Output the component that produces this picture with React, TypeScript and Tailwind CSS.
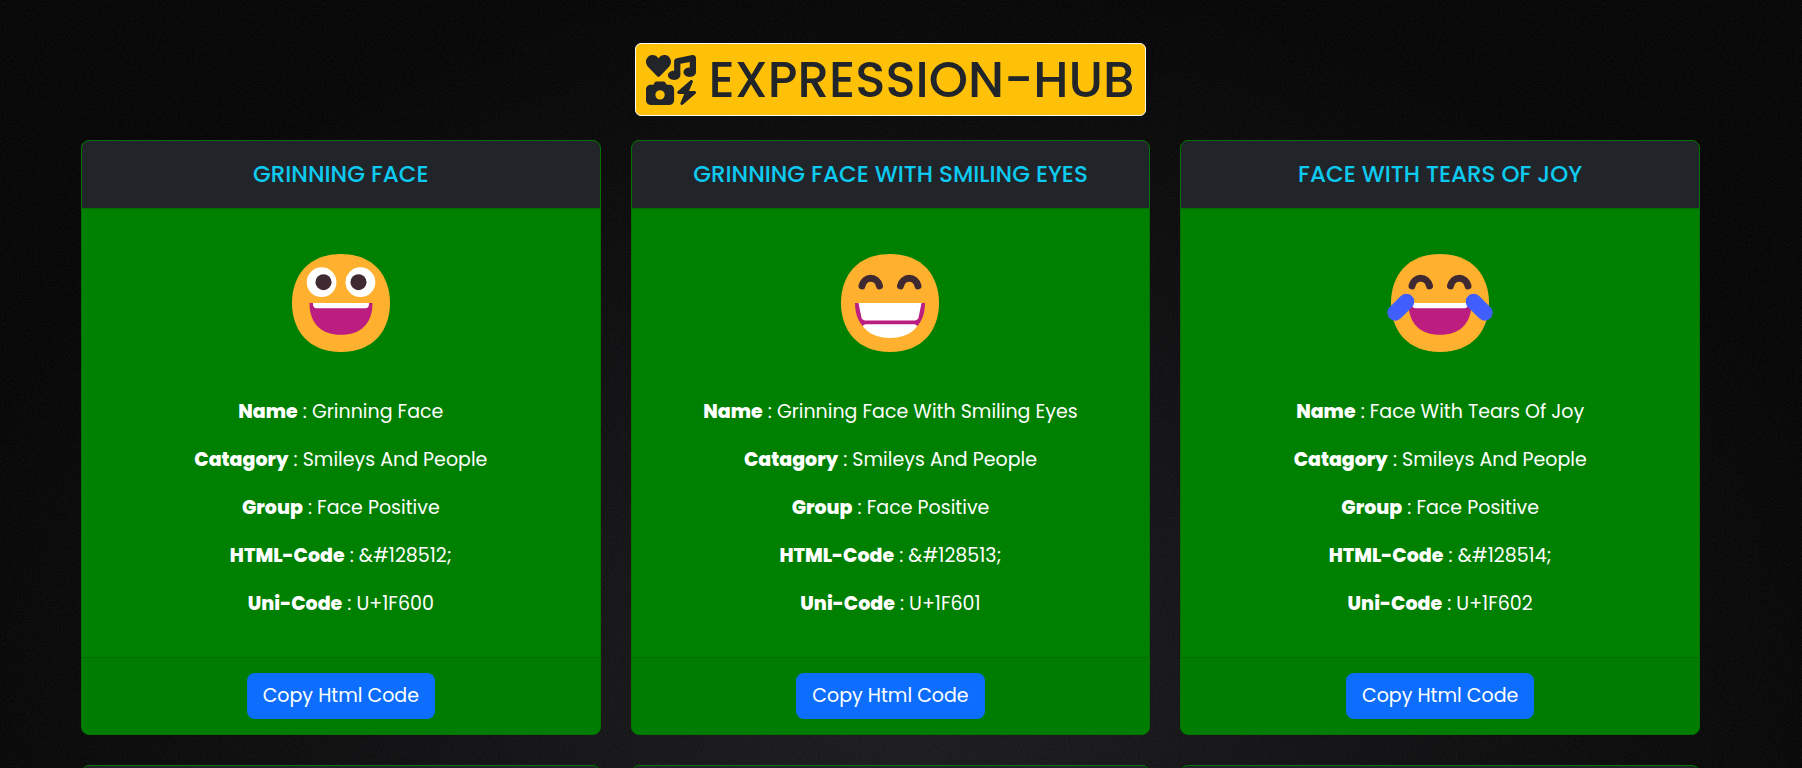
import { FaIcons } from "react-icons/fa6";
import type { ReactNode } from "react";

const EYES = (
  <g fill="none" stroke="#402A32" strokeWidth="2" strokeLinecap="round">
    <path d="M8 11.1C8.3 9.8 9.3 8.95 10.5 8.95S12.7 9.8 13 11.1" />
    <path d="M19 11.1C19.3 9.8 20.3 8.95 21.5 8.95S23.7 9.8 24 11.1" />
  </g>
);

const OPEN_MOUTH = (
  <>
    <path d="M7 16C7 22 10.5 25.1 16 25.1S25 22 25 16Z" fill="#BB1D80" />
    <path d="M8 16H24V16.5C24 17.05 23.55 17.5 23 17.5H9C8.45 17.5 8 17.05 8 16.5Z" fill="white" />
  </>
);

function Face({ label, children }: { label: string; children: ReactNode }) {
  return (
    <svg viewBox="0 0 32 32" className="size-28" role="img" aria-label={label}>
      <path
        d="M16 30C25.33 30 30 23.73 30 16S25.33 2 16 2 2 8.27 2 16 6.67 30 16 30Z"
        fill="#FFB02E"
      />
      {children}
    </svg>
  );
}

const EMOJIS = [
  {
    name: "Grinning Face",
    html: "&#128512;",
    uni: "U+1F600",
    art: (
      <>
        <circle cx="10.45" cy="10.05" r="4.25" fill="white" />
        <circle cx="21.55" cy="10.05" r="4.25" fill="white" />
        <circle cx="11" cy="10.05" r="2.3" fill="#402A32" />
        <circle cx="21" cy="10.05" r="2.3" fill="#402A32" />
        {OPEN_MOUTH}
      </>
    ),
  },
  {
    name: "Grinning Face With Smiling Eyes",
    html: "&#128513;",
    uni: "U+1F601",
    art: (
      <>
        {EYES}
        <path d="M6 16C6 18.6 6.7 20.9 8.2 22.6H23.8C25.3 20.9 26 18.6 26 16Z" fill="#BB1D80" />
        <path d="M7 16H25L24.2 20C24.1 20.6 23.6 21 23 21H9C8.4 21 7.9 20.6 7.8 20Z" fill="white" />
        <path d="M8.2 22.6C8.5 22.2 8.8 22.05 9.2 22.05H22.8C23.2 22.05 23.5 22.2 23.8 22.6C22 25 19.4 26 16 26S10 25 8.2 22.6Z" fill="white" />
      </>
    ),
  },
  {
    name: "Face With Tears Of Joy",
    html: "&#128514;",
    uni: "U+1F602",
    art: (
      <>
        {EYES}
        {OPEN_MOUTH}
        <path
          d="M6.4 15.6L3.2 18.8M25.6 15.6L28.8 18.8"
          stroke="#3F5FFF"
          strokeWidth="4.5"
          strokeLinecap="round"
        />
      </>
    ),
  },
];

const NEXT_ROW = ["U+1F603", "U+1F604", "U+1F605"];

function Field({ label, value }: { label: string; value: string }) {
  return (
    <p>
      <b className="font-extrabold">{label}</b> : {value}
    </p>
  );
}

export default function App() {
  return (
    <div className="relative h-screen overflow-hidden bg-black bg-[radial-gradient(ellipse_55%_95%_at_50%_90%,#18181b_0%,#0b0b0d_50%,#000000_100%)] font-['Poppins','Inter',sans-serif]">
      <svg className="absolute inset-0 size-full opacity-10" aria-hidden="true">
        <filter id="grain">
          <feTurbulence type="fractalNoise" baseFrequency="0.8" numOctaves="2" />
          <feColorMatrix type="saturate" values="0" />
        </filter>
        <rect width="100%" height="100%" filter="url(#grain)" />
      </svg>
      <main className="relative pt-[43px] pr-[102px] pl-[81px]">
        <header className="mb-6 flex justify-center">
          <h1 className="flex items-center gap-3 rounded-md border border-[#f8f9fa] bg-[#ffc107] px-[10px] text-[50px] leading-[71px] font-medium text-[#212529]">
            <FaIcons className="size-[50px]" />
            EXPRESSION-HUB
          </h1>
        </header>
        <div className="grid grid-cols-3 gap-[30px]">
          {EMOJIS.map((e) => (
            <article key={e.uni} className="rounded-lg border border-[#007000] bg-[#008000] text-white">
              <h2 className="rounded-t-[7px] border-b border-[#006f00] bg-[#212529] px-4 py-4 text-center text-[23px] leading-[35px] font-medium text-[#0dcaf0] uppercase">
                {e.name}
              </h2>
              <div className="flex flex-col items-center px-4 pt-[38px] pb-[38px]">
                <Face label={e.name}>{e.art}</Face>
                <div className="mt-[38px] flex flex-col gap-[18px] text-center text-[19px] leading-[30px]">
                  <Field label="Name" value={e.name} />
                  <Field label="Catagory" value="Smileys And People" />
                  <Field label="Group" value="Face Positive" />
                  <Field label="HTML-Code" value={e.html} />
                  <Field label="Uni-Code" value={e.uni} />
                </div>
              </div>
              <footer className="flex justify-center rounded-b-[7px] border-t border-[#006f00] bg-[#007c00] py-[15px]">
                <button
                  type="button"
                  className="rounded-lg bg-[#0d6efd] px-4 py-2 text-[19px] leading-[30px] text-white"
                >
                  Copy Html Code
                </button>
              </footer>
            </article>
          ))}
          {NEXT_ROW.map((id) => (
            <article key={id} className="h-[68px] rounded-lg border border-[#007000] bg-[#212529]" />
          ))}
        </div>
      </main>
    </div>
  );
}
